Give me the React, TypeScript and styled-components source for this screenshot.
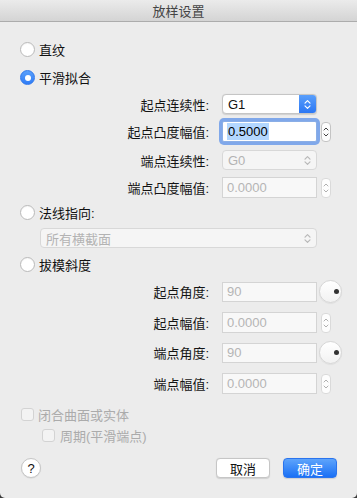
import React from "react";
import styled, { createGlobalStyle } from "styled-components";

const Global = createGlobalStyle`
  html, body { margin: 0; padding: 0; background: #3a3a3a; }
  body { font-family: "Liberation Sans", "Noto Sans CJK SC", sans-serif; font-size: 13px; }
  * { box-sizing: border-box; }
`;

const Window = styled.div`
  width: 357px;
  height: 498px;
  background: #ececec;
  border-radius: 0 0 5px 5px;
  display: flex;
  flex-direction: column;
  overflow: hidden;
  color: #111;
`;

const TitleBar = styled.div`
  height: 22px;
  flex: none;
  display: flex;
  align-items: center;
  justify-content: center;
  background: linear-gradient(#ebebeb, #d4d4d4);
  border-bottom: 1px solid #acacac;
  color: #444;
  font-size: 13px;
`;

const Row = styled.div<{ $mt: number; $h: number; $pl?: number }>`
  margin-top: ${(p) => p.$mt}px;
  height: ${(p) => p.$h}px;
  padding-left: ${(p) => p.$pl ?? 0}px;
  display: flex;
  align-items: center;
  flex: none;
`;

const FormRow = styled.div<{ $mt: number; $h: number }>`
  margin-top: ${(p) => p.$mt}px;
  height: ${(p) => p.$h}px;
  display: grid;
  grid-template-columns: 222px 95px auto;
  align-items: center;
  flex: none;
`;

const Label = styled.div`
  text-align: right;
  padding-right: 13px;
  color: #141414;
  white-space: nowrap;
  font-size: 13px;
`;

const RadioCircle = styled.span<{ $on?: boolean }>`
  width: 15px;
  height: 15px;
  border-radius: 50%;
  flex: none;
  display: inline-flex;
  align-items: center;
  justify-content: center;
  background: ${(p) => (p.$on ? "linear-gradient(#5aa0fb, #2f7cf6)" : "#ffffff")};
  border: 1px solid ${(p) => (p.$on ? "#2f78ec" : "#b9b9b9")};
  box-shadow: ${(p) => (p.$on ? "none" : "inset 0 1px 1px rgba(0,0,0,0.04)")};
  &::after {
    content: "";
    display: ${(p) => (p.$on ? "block" : "none")};
    width: 6px;
    height: 6px;
    border-radius: 50%;
    background: #fff;
  }
`;

const OptionText = styled.span<{ $disabled?: boolean; $gap?: number }>`
  margin-left: ${(p) => p.$gap ?? 4}px;
  color: ${(p) => (p.$disabled ? "#ababab" : "#111")};
  font-size: 13px;
`;

const CheckBox = styled.span`
  width: 13px;
  height: 13px;
  border-radius: 3px;
  border: 1px solid #d3d3d3;
  background: #f3f3f3;
  flex: none;
`;

const SelectBox = styled.div<{ $disabled?: boolean; $w?: number; $ml?: number }>`
  height: 100%;
  width: ${(p) => (p.$w ? `${p.$w}px` : "auto")};
  margin-left: ${(p) => p.$ml ?? 0}px;
  border-radius: 4px;
  background: ${(p) => (p.$disabled ? "#f5f5f5" : "#ffffff")};
  border: 1px solid ${(p) => (p.$disabled ? "#d8d8d8" : "#c5c5c5")};
  box-shadow: ${(p) => (p.$disabled ? "none" : "0 0.5px 1px rgba(0,0,0,0.12)")};
  display: flex;
  align-items: center;
  justify-content: space-between;
  overflow: hidden;
  color: ${(p) => (p.$disabled ? "#b3b3b3" : "#111")};
  font-size: 13px;
`;

const SelectText = styled.span`
  padding-left: 5px;
`;

const BlueArrows = styled.span`
  width: 17px;
  height: 100%;
  background: linear-gradient(#5a9ffb, #2b77f4);
  display: flex;
  align-items: center;
  justify-content: center;
`;

const GrayArrows = styled.span`
  width: 17px;
  height: 100%;
  display: flex;
  align-items: center;
  justify-content: center;
`;

const TextInput = styled.div<{ $disabled?: boolean; $focus?: boolean; $h?: number }>`
  height: ${(p) => (p.$h ? `${p.$h}px` : "100%")};
  background: ${(p) => (p.$disabled ? "#f8f8f8" : "#ffffff")};
  border: 1px solid ${(p) => (p.$focus ? "#8aaee6" : p.$disabled ? "#d4d4d4" : "#c5c5c5")};
  box-shadow: ${(p) => (p.$focus ? "0 0 0 3px #80a8ea" : "none")};
  border-radius: ${(p) => (p.$focus ? "2px" : "0")};
  display: flex;
  align-items: center;
  padding-left: 4px;
  color: ${(p) => (p.$disabled ? "#b5b5b5" : "#000")};
  font-size: 13px;
`;

const Selected = styled.span`
  background: #b3d7ff;
  padding: 1px 1px;
`;

const Stepper = styled.div<{ $disabled?: boolean }>`
  margin-left: 4px;
  width: 10px;
  height: 20px;
  border-radius: 4px;
  background: #fdfdfd;
  border: 1px solid ${(p) => (p.$disabled ? "#dadada" : "#c4c4c4")};
  display: flex;
  align-items: center;
  justify-content: center;
`;

const Dial = styled.div`
  margin-left: 2px;
  width: 23px;
  height: 23px;
  border-radius: 50%;
  background: linear-gradient(#ffffff, #f2f2f2);
  border: 1px solid #d6d6d6;
  box-shadow: 0 0.5px 1px rgba(0,0,0,0.08);
  display: flex;
  align-items: center;
  justify-content: flex-end;
  padding-right: 2px;
`;

const DialDot = styled.span`
  width: 5px;
  height: 5px;
  border-radius: 50%;
  background: #333;
`;

const Footer = styled.div`
  margin-top: 13px;
  height: 20px;
  padding: 0 20px 0 21px;
  display: flex;
  align-items: center;
  flex: none;
`;

const HelpButton = styled.div`
  width: 20px;
  height: 20px;
  border-radius: 50%;
  background: #fff;
  border: 1px solid #c6c6c6;
  box-shadow: 0 0.5px 1px rgba(0,0,0,0.1);
  display: flex;
  align-items: center;
  justify-content: center;
  font-size: 13px;
  color: #111;
`;

const Spacer = styled.div`
  flex: 1;
`;

const PushButton = styled.div<{ $primary?: boolean }>`
  width: 54px;
  height: 20px;
  margin-left: 13px;
  border-radius: 4px;
  display: flex;
  align-items: center;
  justify-content: center;
  font-size: 13px;
  background: ${(p) => (p.$primary ? "linear-gradient(#5ea4fb, #1a70f5)" : "#ffffff")};
  color: ${(p) => (p.$primary ? "#ffffff" : "#111")};
  border: 1px solid ${(p) => (p.$primary ? "#2a74ee" : "#c6c6c6")};
  box-shadow: 0 0.5px 1px rgba(0,0,0,0.12);
`;

const Chevrons = ({ color }: { color: string }) => (
  <svg width="7" height="11" viewBox="0 0 7 11">
    <path d="M1 4.2 L3.5 1.7 L6 4.2" fill="none" stroke={color} strokeWidth="1.2" strokeLinecap="round" strokeLinejoin="round" />
    <path d="M1 6.8 L3.5 9.3 L6 6.8" fill="none" stroke={color} strokeWidth="1.2" strokeLinecap="round" strokeLinejoin="round" />
  </svg>
);

const SmallChevrons = ({ color }: { color: string }) => (
  <svg width="6" height="14" viewBox="0 0 6 14">
    <path d="M1 5 L3 3 L5 5" fill="none" stroke={color} strokeWidth="1" strokeLinecap="round" strokeLinejoin="round" />
    <path d="M1 9 L3 11 L5 9" fill="none" stroke={color} strokeWidth="1" strokeLinecap="round" strokeLinejoin="round" />
  </svg>
);

export default function App() {
  return (
    <>
      <Global />
      <Window>
        <TitleBar>放样设置</TitleBar>

        <Row $mt={17} $h={21} $pl={20}>
          <RadioCircle />
          <OptionText>直纹</OptionText>
        </Row>
        <Row $mt={7} $h={21} $pl={20}>
          <RadioCircle $on />
          <OptionText>平滑拟合</OptionText>
        </Row>

        <FormRow $mt={6} $h={20}>
          <Label>起点连续性:</Label>
          <SelectBox>
            <SelectText>G1</SelectText>
            <BlueArrows>
              <Chevrons color="#ffffff" />
            </BlueArrows>
          </SelectBox>
        </FormRow>
        <FormRow $mt={7} $h={21}>
          <Label>起点凸度幅值:</Label>
          <TextInput $focus>
            <Selected>0.5000</Selected>
          </TextInput>
          <Stepper>
            <SmallChevrons color="#444" />
          </Stepper>
        </FormRow>
        <FormRow $mt={8} $h={20}>
          <Label>端点连续性:</Label>
          <SelectBox $disabled>
            <SelectText>G0</SelectText>
            <GrayArrows>
              <Chevrons color="#b8b8b8" />
            </GrayArrows>
          </SelectBox>
        </FormRow>
        <FormRow $mt={7} $h={21}>
          <Label>端点凸度幅值:</Label>
          <TextInput $disabled>0.0000</TextInput>
          <Stepper $disabled>
            <SmallChevrons color="#b0b0b0" />
          </Stepper>
        </FormRow>

        <Row $mt={4} $h={20} $pl={20}>
          <RadioCircle />
          <OptionText>法线指向:</OptionText>
        </Row>
        <Row $mt={6} $h={20}>
          <SelectBox $disabled $w={277} $ml={40}>
            <SelectText>所有横截面</SelectText>
            <GrayArrows>
              <Chevrons color="#b8b8b8" />
            </GrayArrows>
          </SelectBox>
        </Row>
        <Row $mt={6} $h={20} $pl={20}>
          <RadioCircle />
          <OptionText>拔模斜度</OptionText>
        </Row>

        <FormRow $mt={6} $h={23}>
          <Label>起点角度:</Label>
          <TextInput $disabled $h={20}>90</TextInput>
          <Dial>
            <DialDot />
          </Dial>
        </FormRow>
        <FormRow $mt={9} $h={21}>
          <Label>起点幅值:</Label>
          <TextInput $disabled>0.0000</TextInput>
          <Stepper $disabled>
            <SmallChevrons color="#b0b0b0" />
          </Stepper>
        </FormRow>
        <FormRow $mt={8} $h={23}>
          <Label>端点角度:</Label>
          <TextInput $disabled $h={20}>90</TextInput>
          <Dial>
            <DialDot />
          </Dial>
        </FormRow>
        <FormRow $mt={9} $h={21}>
          <Label>端点幅值:</Label>
          <TextInput $disabled>0.0000</TextInput>
          <Stepper $disabled>
            <SmallChevrons color="#b0b0b0" />
          </Stepper>
        </FormRow>

        <Row $mt={10} $h={20} $pl={21}>
          <CheckBox />
          <OptionText $disabled>闭合曲面或实体</OptionText>
        </Row>
        <Row $mt={1} $h={20} $pl={42}>
          <CheckBox />
          <OptionText $disabled $gap={5}>周期(平滑端点)</OptionText>
        </Row>

        <Footer>
          <HelpButton>?</HelpButton>
          <Spacer />
          <PushButton>取消</PushButton>
          <PushButton $primary>确定</PushButton>
        </Footer>
      </Window>
    </>
  );
}
